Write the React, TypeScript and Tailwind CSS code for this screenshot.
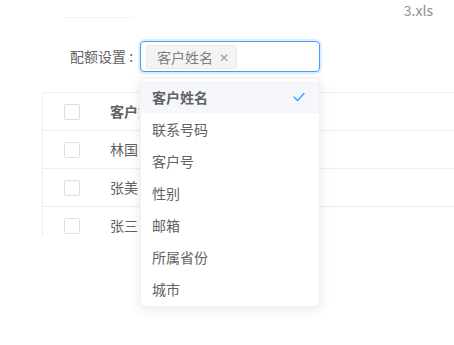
import React from "react";

const font = { fontFamily: '"Noto Sans CJK SC", "Liberation Sans", sans-serif' };

function Checkbox() {
  return <div className="w-[16px] h-[16px] border border-[#dcdfe6] rounded-[2px] bg-white" />;
}

function Check() {
  return (
    <svg width="12" height="10" viewBox="0 0 12 10" fill="none">
      <polyline points="1,5 4.5,8.5 11,1.5" stroke="#409eff" strokeWidth="1.4" strokeLinecap="round" strokeLinejoin="round" />
    </svg>
  );
}

export default function App() {
  const items = ["客户姓名", "联系号码", "客户号", "性别", "邮箱", "所属省份", "城市"];
  const rows = ["林国", "张美", "张三"];
  return (
    <div className="relative w-[454px] h-[345px] bg-white overflow-hidden text-[14px] text-[#606266]" style={font}>
      <div className="absolute left-[64px] top-[17px] w-[70px] h-px bg-[#f4f4f4]" />
      <div className="flex justify-end pr-[21px] h-[20px] leading-[20px] text-[#8c8f94]">3.xls</div>
      <div className="flex items-center mt-[21px] h-[31px]">
        <div className="ml-[70px] w-[70px] text-[#606266]">配额设置 :</div>
        <div className="w-[180px] h-[31px] border border-[#409eff] rounded-[4px] shadow-[0_0_0_2px_rgba(64,158,255,0.18)] flex items-center pl-[5px]">
          <div className="h-[24px] flex items-center pl-[10px] pr-[7px] bg-[#f4f4f5] border border-[#e9e9eb] rounded-[3px]">
            <span className="text-[14px] leading-none text-[#7d7f84]">客户姓名</span>
            <span className="ml-[6px] text-[12px] leading-none text-[#9b9da2]">✕</span>
          </div>
        </div>
      </div>
      <div className="ml-[42px] mt-[20px] w-[430px] h-[144px] overflow-hidden border-l border-t border-[#ebeef5] rounded-tl-[4px]">
        <div className="flex items-center h-[38px] border-b border-[#ebeef5]">
          <div className="ml-[21px]"><Checkbox /></div>
          <div className="ml-[30px] w-[29px] overflow-hidden whitespace-nowrap font-bold text-[#606266]">客户姓名</div>
        </div>
        {rows.map((r) => (
          <div key={r} className="flex items-center h-[38px] border-b border-[#ebeef5]">
            <div className="ml-[21px]"><Checkbox /></div>
            <div className="ml-[30px] w-[29px] overflow-hidden whitespace-nowrap text-[#606266]">{r}</div>
          </div>
        ))}
      </div>
      <div className="absolute left-[140px] top-[78px] w-[180px] bg-white rounded-[4px] border border-[#f2f2f2] shadow-[0_2px_12px_0_rgba(0,0,0,0.1)] pt-[2px] pb-[1px]">
        {items.map((it, i) => (
          <div
            key={it}
            className={
              i === 0
                ? "h-[32px] flex items-center justify-between pl-[11px] pr-[14px] bg-[#f5f7fa] font-bold text-[#606266]"
                : "h-[32px] flex items-center pl-[11px] text-[#606266]"
            }
          >
            <span>{it}</span>
            {i === 0 && <Check />}
          </div>
        ))}
      </div>
    </div>
  );
}
